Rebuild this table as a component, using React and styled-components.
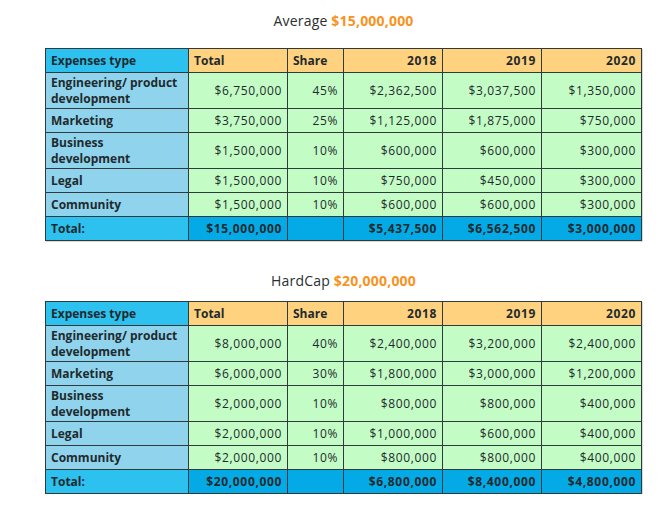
import React from 'react';
import styled, { createGlobalStyle } from 'styled-components';

const GlobalStyle = createGlobalStyle`
  html, body {
    margin: 0;
    padding: 0;
    background: #ffffff;
  }
  body {
    font-family: "Open Sans", "Liberation Sans", sans-serif;
    color: #1f2a2e;
  }
`;

const COLS = [143, 99, 56, 99, 99, 100];

const budgets = [
  {
    label: 'Average',
    amount: '$15,000,000',
    rows: [
      { name: ['Engineering/ product', 'development'], values: ['$6,750,000', '45%', '$2,362,500', '$3,037,500', '$1,350,000'] },
      { name: ['Marketing'], values: ['$3,750,000', '25%', '$1,125,000', '$1,875,000', '$750,000'] },
      { name: ['Business', 'development'], values: ['$1,500,000', '10%', '$600,000', '$600,000', '$300,000'] },
      { name: ['Legal'], values: ['$1,500,000', '10%', '$750,000', '$450,000', '$300,000'] },
      { name: ['Community'], values: ['$1,500,000', '10%', '$600,000', '$600,000', '$300,000'] },
    ],
    total: ['$15,000,000', '', '$5,437,500', '$6,562,500', '$3,000,000'],
  },
  {
    label: 'HardCap',
    amount: '$20,000,000',
    rows: [
      { name: ['Engineering/ product', 'development'], values: ['$8,000,000', '40%', '$2,400,000', '$3,200,000', '$2,400,000'] },
      { name: ['Marketing'], values: ['$6,000,000', '30%', '$1,800,000', '$3,000,000', '$1,200,000'] },
      { name: ['Business', 'development'], values: ['$2,000,000', '10%', '$800,000', '$800,000', '$400,000'] },
      { name: ['Legal'], values: ['$2,000,000', '10%', '$1,000,000', '$600,000', '$400,000'] },
      { name: ['Community'], values: ['$2,000,000', '10%', '$800,000', '$800,000', '$400,000'] },
    ],
    total: ['$20,000,000', '', '$6,800,000', '$8,400,000', '$4,800,000'],
  },
];

const Page = styled.div`
  width: 669px;
  padding: 11px 0 0 45px;
  box-sizing: border-box;
`;

const Section = styled.section`
  width: 597px;
  & + & {
    margin-top: 30px;
  }
`;

const Title = styled.h2`
  margin: 0 0 ${({ $gap }) => $gap}px;
  font-size: 14px;
  line-height: 20px;
  font-weight: 400;
  letter-spacing: 0.2px;
  text-align: center;
  color: #2b2f31;
`;

const Amount = styled.span`
  color: #f7931e;
  font-weight: 700;
`;

const Table = styled.table`
  width: 597px;
  table-layout: fixed;
  border-collapse: collapse;
  font-size: 12px;
  line-height: 16px;
  box-shadow: 1px 1px 0 #d8d8d8;
`;

const Row = styled.tr`
  height: ${({ $tall }) => ($tall ? 36 : 24)}px;
`;

const Cell = styled.td`
  border: 1px solid #2f3a3c;
  padding: 0 5px;
  vertical-align: middle;
  white-space: nowrap;
  text-align: ${({ $align }) => $align || 'right'};
  font-weight: ${({ $bold }) => ($bold ? 700 : 400)};
  letter-spacing: ${({ $num }) => ($num ? '0.65px' : '0')};
  background: ${({ $bg }) => $bg};
  color: #1f2a2e;
`;

const HEADER_BLUE = '#2cc1ee';
const NAME_BLUE = '#8fd4ec';
const ORANGE = '#fed27e';
const GREEN = '#c3fcc5';
const TOTAL_BLUE = '#04aae6';

const BudgetTable = ({ budget, gap }) => (
  <Section>
    <Title $gap={gap}>
      {budget.label} <Amount>{budget.amount}</Amount>
    </Title>
    <Table>
      <colgroup>
        {COLS.map((w, i) => (
          <col key={i} style={{ width: w }} />
        ))}
      </colgroup>
      <tbody>
        <Row>
          <Cell as="th" $align="left" $bold $bg={HEADER_BLUE}>Expenses type</Cell>
          <Cell as="th" $align="left" $bold $bg={ORANGE}>Total</Cell>
          <Cell as="th" $align="left" $bold $bg={ORANGE}>Share</Cell>
          <Cell as="th" $bold $num $bg={ORANGE}>2018</Cell>
          <Cell as="th" $bold $num $bg={ORANGE}>2019</Cell>
          <Cell as="th" $bold $num $bg={ORANGE}>2020</Cell>
        </Row>
        {budget.rows.map((row) => (
          <Row key={row.name.join(' ')} $tall={row.name.length > 1}>
            <Cell $align="left" $bold $bg={NAME_BLUE}>
              {row.name.map((line, i) => (
                <React.Fragment key={i}>
                  {i > 0 && <br />}
                  {line}
                </React.Fragment>
              ))}
            </Cell>
            {row.values.map((v, i) => (
              <Cell key={i} $num $bg={GREEN}>{v}</Cell>
            ))}
          </Row>
        ))}
        <Row>
          <Cell $align="left" $bold $bg={HEADER_BLUE}>Total:</Cell>
          {budget.total.map((v, i) => (
            <Cell key={i} $bold $num $bg={TOTAL_BLUE}>{v}</Cell>
          ))}
        </Row>
      </tbody>
    </Table>
  </Section>
);

const App = () => (
  <>
    <GlobalStyle />
    <Page>
      <BudgetTable budget={budgets[0]} gap={17} />
      <BudgetTable budget={budgets[1]} gap={10} />
    </Page>
  </>
);

export default App;
